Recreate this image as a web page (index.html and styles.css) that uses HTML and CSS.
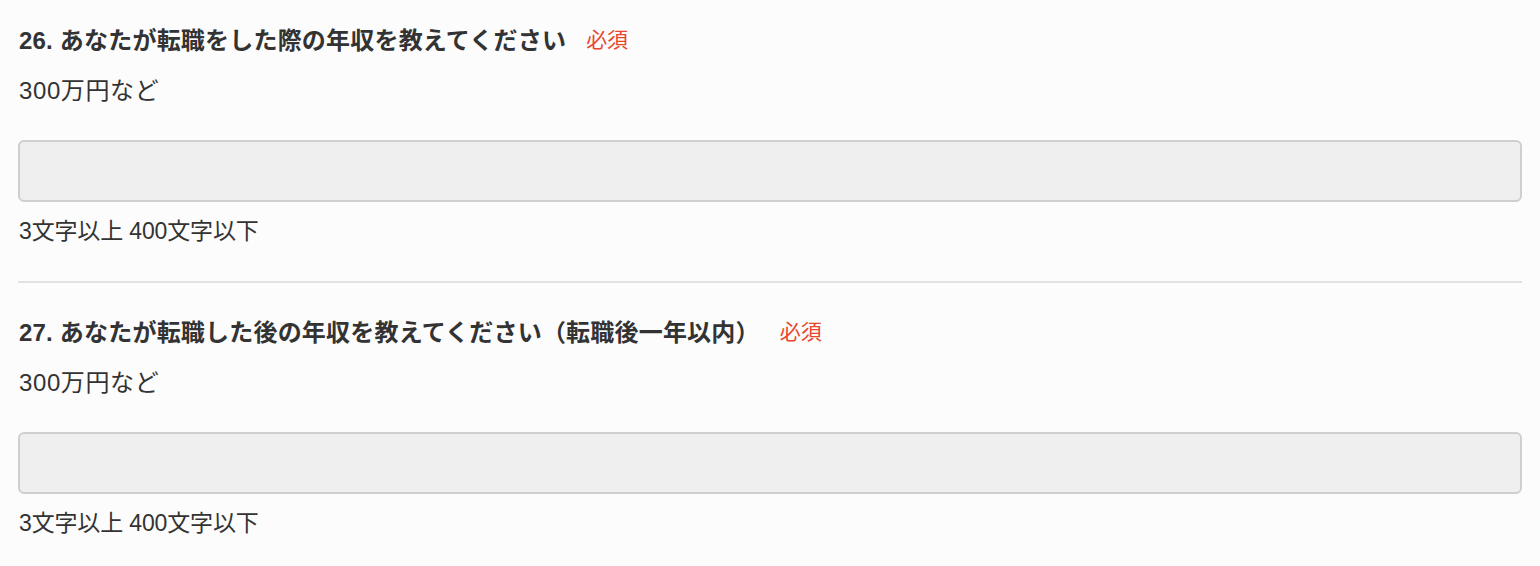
FILE: index.html
```html
<!DOCTYPE html>
<html lang="ja">
<head>
<meta charset="utf-8">
<link rel="stylesheet" href="styles.css">
</head>
<body>
<div class="form">
  <section class="q">
    <div class="q-title"><span class="q-text">26. あなたが転職をした際の年収を教えてください</span><span class="req">必須</span></div>
    <p class="q-desc">300万円など</p>
    <input class="q-input" type="text">
    <p class="q-hint">3文字以上 400文字以下</p>
  </section>
  <section class="q">
    <div class="q-title"><span class="q-text">27. あなたが転職した後の年収を教えてください（転職後一年以内）</span><span class="req">必須</span></div>
    <p class="q-desc">300万円など</p>
    <input class="q-input" type="text">
    <p class="q-hint">3文字以上 400文字以下</p>
  </section>
</div>
</body>
</html>
```
FILE: styles.css
```css
html, body {
  margin: 0;
  padding: 0;
  background: #fcfcfc;
}
body {
  font-family: "Liberation Sans", "Noto Sans CJK JP", sans-serif;
  color: #333;
}
.form {
  padding: 0 18px;
}
.q {
  padding-top: 31px;
  padding-bottom: 35px;
  border-bottom: 2px solid #e2e2e2;
}
.q:first-child {
  padding-top: 22px;
}
.q:last-child {
  border-bottom: none;
}
.q-title {
  display: flex;
  align-items: center;
  gap: 20px;
  height: 32px;
}
.q-text {
  font-size: 24px;
  font-weight: bold;
  color: #333;
  padding-left: 1px;
  letter-spacing: 0.2px;
}
.req {
  font-size: 21px;
  color: #e8462d;
}
.q-desc {
  margin: 21px 0 0;
  font-size: 24px;
  line-height: 32px;
  letter-spacing: 0.6px;
  padding-left: 1px;
}
.q-input {
  display: block;
  box-sizing: border-box;
  width: 100%;
  height: 62px;
  margin: 33px 0 0;
  border: 2px solid #cfcfcf;
  border-radius: 6px;
  background: #efefef;
}
.q-hint {
  margin: 14px 0 0;
  font-size: 23px;
  line-height: 30px;
  padding-left: 1px;
  letter-spacing: -0.15px;
}
```
